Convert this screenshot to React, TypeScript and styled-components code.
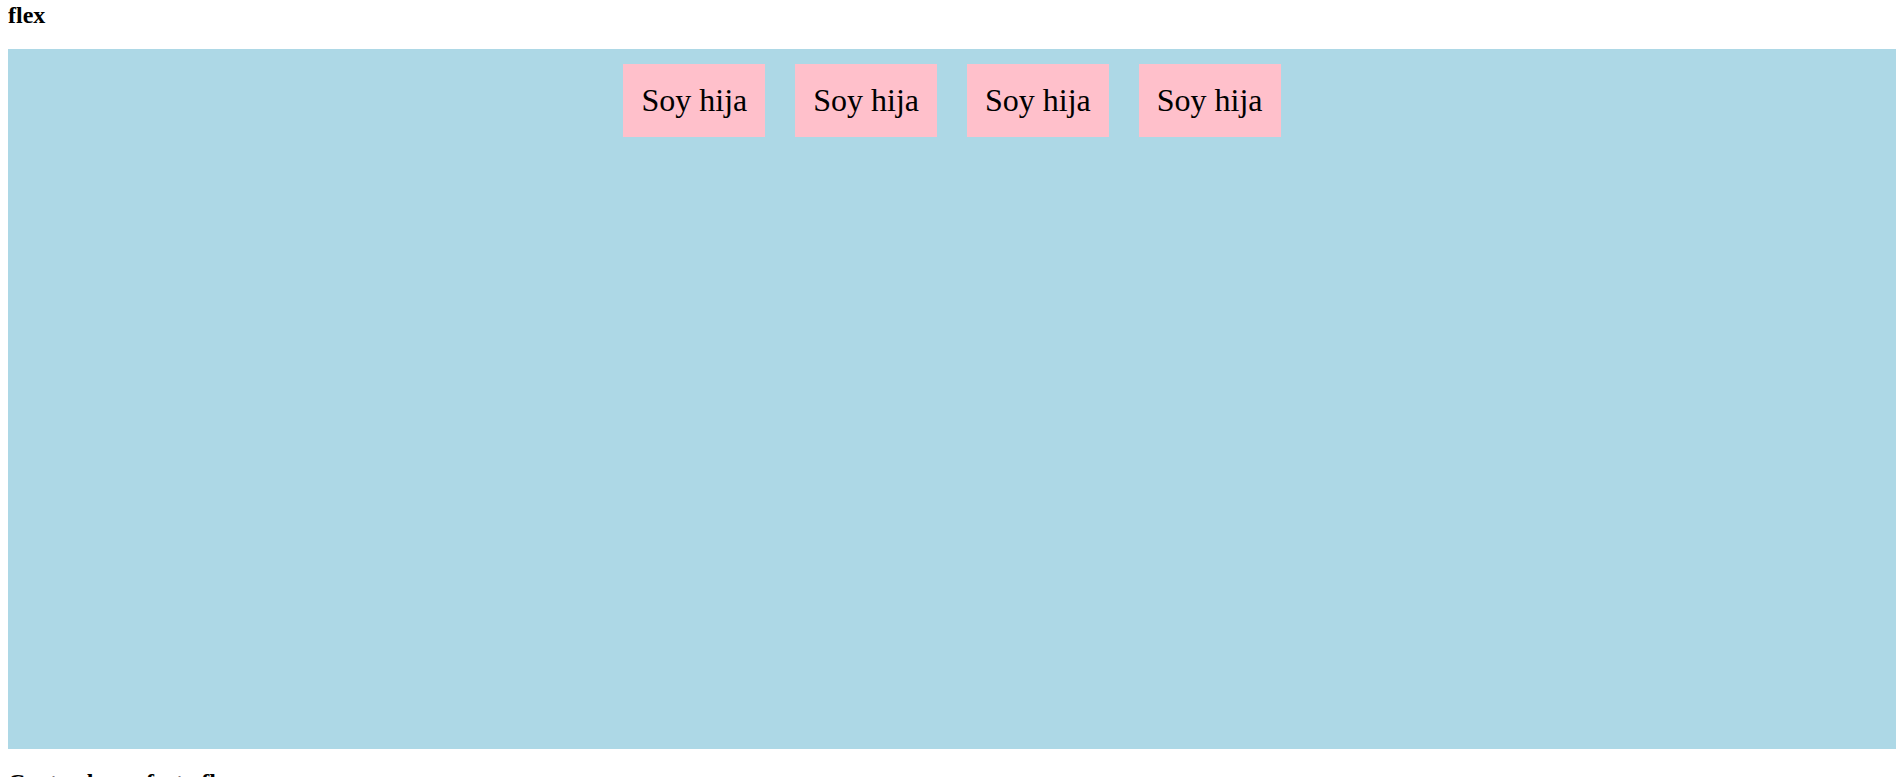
import styled, { createGlobalStyle } from "styled-components";

const GlobalStyle = createGlobalStyle`
  body {
    margin: 0 8px 8px;
    font-family: "Liberation Serif", "Times New Roman", serif;
    background: white;
  }
`;

const Title = styled.h2<{ $first?: boolean }>`
  font-size: 24px;
  font-weight: bold;
  margin: ${(p) => (p.$first ? "2px" : "20px")} 0 20px;
`;

const FlexBox = styled.div`
  background-color: lightblue;
  display: flex;
  justify-content: center;
  align-items: flex-start;
  height: 700px;
`;

const Child = styled.div`
  background-color: pink;
  font-size: 32px;
  margin: 15px;
  padding: 18px;
`;

export default function App() {
  return (
    <>
      <GlobalStyle />
      <Title $first>flex</Title>
      <FlexBox>
        {[1, 2, 3, 4].map((n) => (
          <Child key={n}>Soy hija</Child>
        ))}
      </FlexBox>
      <Title>Centrado perfecto flex</Title>
    </>
  );
}
